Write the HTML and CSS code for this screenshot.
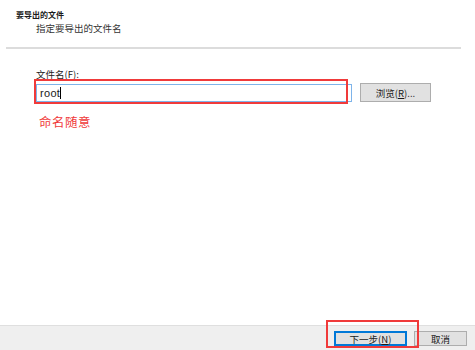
FILE: index.html
```html
<!DOCTYPE html>
<html lang="zh-CN">
<head>
    <meta charset="UTF-8" />
    <title>导出向导</title>
    <link rel="stylesheet" href="styles.css">
</head>
<body>
    <div class="wizard">
        <header class="wizard-header">
            <h1>要导出的文件</h1>
            <p class="subtitle">指定要导出的文件名</p>
        </header>
        <div class="divider"></div>

        <main class="wizard-body">
            <div class="field-label">文件名(<u>F</u>):</div>
            <div class="field-row">
                <div class="input-wrap">
                    <div class="text-input">root<span class="caret"></span></div>
                    <span class="mark mark-input"></span>
                </div>
                <button class="btn">浏览(<u>R</u>)...</button>
            </div>
            <p class="note">命名随意</p>
        </main>

        <footer class="wizard-footer">
            <div class="next-wrap">
                <button class="btn btn-default">下一步(<u>N</u>)</button>
                <span class="mark mark-next"></span>
            </div>
            <button class="btn btn-cancel">取消</button>
        </footer>
    </div>
</body>
</html>
```

FILE: styles.css
```css
:root {
    --text: #1a1a1a;
    --border-input: #7eb4ea;
    --btn-bg: #e1e1e1;
    --btn-border: #adadad;
    --accent: #0078d7;
    --mark: #f03a3a;
    --footer-bg: #efefef;
}

* {
    margin: 0;
    padding: 0;
    box-sizing: border-box;
}

body {
    font-family: "Noto Sans CJK SC", "Liberation Sans", sans-serif;
    color: var(--text);
    background: #ffffff;
}

.wizard {
    height: 350px;
    display: flex;
    flex-direction: column;
}

.wizard-header {
    padding: 9px 16px 0;
    height: 47px;
}

h1 {
    font-size: 8px;
    line-height: 12px;
    font-weight: 700;
}

.subtitle {
    font-size: 9.5px;
    line-height: 14px;
    padding-left: 20px;
    color: #333;
}

.divider {
    height: 2px;
    margin: 0 14px 0 6px;
    background: #dcdcdc;
}

.wizard-body {
    flex: 1;
    padding: 18px 0 0 36px;
}

.field-label {
    font-size: 9.5px;
    line-height: 14px;
}

.field-label u,
.btn u {
    text-decoration: underline;
}

.field-row {
    display: flex;
    align-items: center;
    gap: 8px;
    margin-top: 2px;
}

.input-wrap {
    position: relative;
    width: 316px;
    height: 18px;
}

.text-input {
    height: 100%;
    border: 1px solid var(--border-input);
    padding: 0 3px;
    display: flex;
    align-items: center;
    font-family: "Liberation Sans", sans-serif;
    font-size: 11px;
    letter-spacing: 0.3px;
}

.caret {
    width: 1px;
    height: 12px;
    background: #000;
}

.mark {
    position: absolute;
    border: 2px solid var(--mark);
    pointer-events: none;
}

.mark-input {
    left: -2px;
    top: -5px;
    width: 314px;
    height: 25px;
}

.btn {
    height: 19px;
    padding: 0 10px;
    background: var(--btn-bg);
    border: 1px solid var(--btn-border);
    font-family: inherit;
    font-size: 9.5px;
    color: var(--text);
}

.field-row .btn {
    width: 71px;
}

.note {
    margin: 12px 0 0 3px;
    font-size: 12.5px;
    line-height: 16px;
    letter-spacing: 0.5px;
    color: var(--mark);
}

.wizard-footer {
    height: 25px;
    background: var(--footer-bg);
    border-top: 1px solid #dfdfdf;
    display: flex;
    align-items: center;
    justify-content: flex-end;
    gap: 7px;
    padding-right: 8px;
}

.next-wrap {
    position: relative;
}

.btn-default {
    width: 73px;
    height: 15px;
    padding: 0;
    border: 1px solid var(--accent);
    box-shadow: inset 0 0 0 1px var(--accent);
    display: block;
}

.btn-cancel {
    width: 53px;
    height: 15px;
    padding: 0;
}

.mark-next {
    left: -8px;
    top: -11px;
    width: 93px;
    height: 28px;
}
```
